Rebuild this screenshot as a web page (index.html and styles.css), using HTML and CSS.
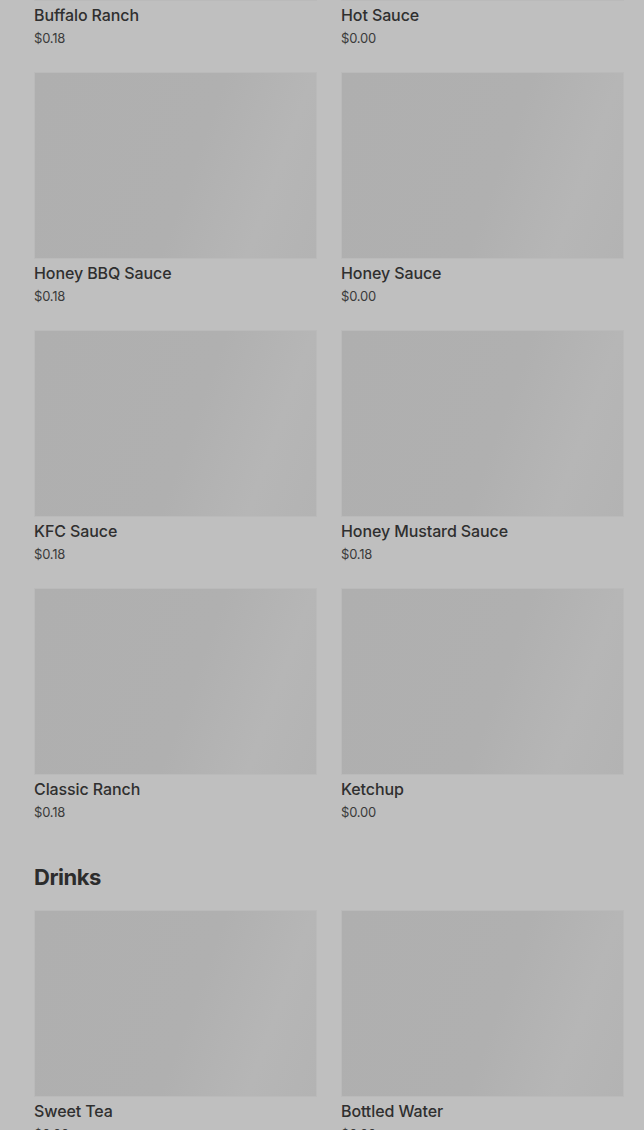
FILE: index.html
```html
<!DOCTYPE html>
<html>
<head>
<meta charset="utf-8">
<link rel="stylesheet" href="styles.css">
</head>
<body>
<div class="page">
  <section class="section first">
    <div class="grid">
      <div class="card"><div class="thumb"></div><div class="name">Buffalo Ranch</div><div class="price">$0.18</div></div>
      <div class="card"><div class="thumb"></div><div class="name">Hot Sauce</div><div class="price">$0.00</div></div>
      <div class="card"><div class="thumb"></div><div class="name">Honey BBQ Sauce</div><div class="price">$0.18</div></div>
      <div class="card"><div class="thumb"></div><div class="name">Honey Sauce</div><div class="price">$0.00</div></div>
      <div class="card"><div class="thumb"></div><div class="name">KFC Sauce</div><div class="price">$0.18</div></div>
      <div class="card"><div class="thumb"></div><div class="name">Honey Mustard Sauce</div><div class="price">$0.18</div></div>
      <div class="card"><div class="thumb"></div><div class="name">Classic Ranch</div><div class="price">$0.18</div></div>
      <div class="card"><div class="thumb"></div><div class="name">Ketchup</div><div class="price">$0.00</div></div>
    </div>
  </section>
  <section class="section">
    <h2 class="heading">Drinks</h2>
    <div class="grid">
      <div class="card"><div class="thumb"></div><div class="name">Sweet Tea</div><div class="price">$0.00</div></div>
      <div class="card"><div class="thumb"></div><div class="name">Bottled Water</div><div class="price">$0.00</div></div>
    </div>
  </section>
</div>
</body>
</html>
```

FILE: styles.css
```css
html, body {
  margin: 0;
  padding: 0;
  background: #bfbfbf;
  overflow: hidden;
}
body {
  font-family: Inter, "Liberation Sans", sans-serif;
  color: #2e2e2e;
}
.page {
  padding: 0 20px 0 34px;
  margin-top: -186px;
}
.section.first {
  margin-bottom: 38px;
}
.grid {
  display: grid;
  grid-template-columns: 283px 283px;
  column-gap: 24px;
  row-gap: 23px;
}
.card {
  display: flex;
  flex-direction: column;
}
.thumb {
  height: 185px;
  border: 1px solid #bababa;
  background: linear-gradient(110deg, #afafaf 0%, #b0b0b0 55%, #b6b6b6 80%, #b3b3b3 100%);
}
.name {
  margin-top: 2px;
  font-size: 16px;
  line-height: 24px;
  font-weight: 500;
  letter-spacing: -0.1px;
  color: #2f2f2f;
}
.price {
  font-size: 13px;
  line-height: 22px;
  color: #3a3a3a;
  letter-spacing: -0.2px;
}
.heading {
  margin: 0 0 17px 0;
  font-size: 22px;
  line-height: 32px;
  font-weight: 700;
  letter-spacing: -0.5px;
  color: #2c2c2c;
}
```
